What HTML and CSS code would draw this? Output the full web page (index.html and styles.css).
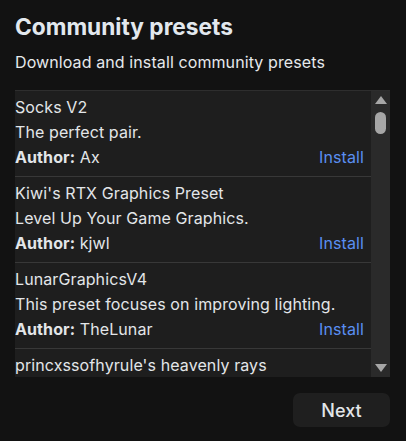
FILE: index.html
```html
<!DOCTYPE html>
<html>
<head>
<meta charset="utf-8">
<link rel="stylesheet" href="styles.css">
</head>
<body>
<div class="panel">
  <h1 class="title">Community presets</h1>
  <p class="subtitle">Download and install community presets</p>
  <div class="listbox">
    <div class="list">
      <div class="item">
        <div class="line">Socks V2</div>
        <div class="line">The perfect pair.</div>
        <div class="line meta"><span><b>Author:</b> Ax</span><a class="install">Install</a></div>
      </div>
      <div class="item">
        <div class="line">Kiwi's RTX Graphics Preset</div>
        <div class="line">Level Up Your Game Graphics.</div>
        <div class="line meta"><span><b>Author:</b> kjwl</span><a class="install">Install</a></div>
      </div>
      <div class="item">
        <div class="line">LunarGraphicsV4</div>
        <div class="line">This preset focuses on improving lighting.</div>
        <div class="line meta"><span><b>Author:</b> TheLunar</span><a class="install">Install</a></div>
      </div>
      <div class="item last">
        <div class="line">princxssofhyrule's heavenly rays</div>
      </div>
    </div>
    <div class="scrollbar">
      <div class="arrow up"></div>
      <div class="thumb"></div>
      <div class="spacer"></div>
      <div class="arrow down"></div>
    </div>
  </div>
  <div class="actions">
    <button class="next">Next</button>
  </div>
</div>
</body>
</html>
```

FILE: styles.css
```css
html, body {
  margin: 0;
  padding: 0;
  background: #121212;
}
body {
  font-family: Inter, "Noto Sans", sans-serif;
  color: #e6e9ec;
}
.panel {
  padding: 12px 16px 0 15px;
}
.title {
  margin: 0;
  font-size: 22.7px;
  font-weight: 700;
  line-height: 30px;
  color: #e2e8ee;
}
.subtitle {
  margin: 10px 0 0;
  font-size: 16px;
  letter-spacing: 0.1px;
  line-height: 20px;
  color: #e6e9ec;
}
.listbox {
  margin-top: 18px;
  display: flex;
  height: 286px;
  background: #1e1e1e;
  border-top: 1px solid #2e2e2e;
  overflow: hidden;
}
.list {
  flex: 1;
  min-width: 0;
}
.item {
  padding: 4px 7px 6px 0;
  border-bottom: 1px solid #383838;
}
.item.last {
  border-bottom: none;
}
.line {
  font-size: 16px;
  letter-spacing: 0.1px;
  line-height: 25px;
  white-space: nowrap;
  color: #e3e6e9;
}
.meta {
  display: flex;
  justify-content: space-between;
}
.meta b {
  font-weight: 700;
}
.install {
  color: #5a8ff2;
}
.scrollbar {
  width: 19px;
  background: #2a2a2a;
  display: flex;
  flex-direction: column;
  align-items: center;
}
.arrow {
  width: 0;
  height: 0;
  border-left: 6px solid transparent;
  border-right: 6px solid transparent;
}
.arrow.up {
  margin-top: 5px;
  border-bottom: 8px solid #a6a6a6;
}
.arrow.down {
  margin-bottom: 5px;
  border-top: 8px solid #a6a6a6;
}
.thumb {
  margin-top: 8px;
  width: 11px;
  height: 22px;
  border-radius: 6px;
  background: #a6a6a6;
}
.spacer {
  flex: 1;
}
.actions {
  display: flex;
  justify-content: flex-end;
  margin-top: 16px;
}
.next {
  width: 97px;
  height: 34px;
  border: none;
  border-radius: 7px;
  background: #1f1f1f;
  color: #e3e6e9;
  font-family: Inter, "Noto Sans", sans-serif;
  font-size: 18px;
  font-weight: 500;
}
```
